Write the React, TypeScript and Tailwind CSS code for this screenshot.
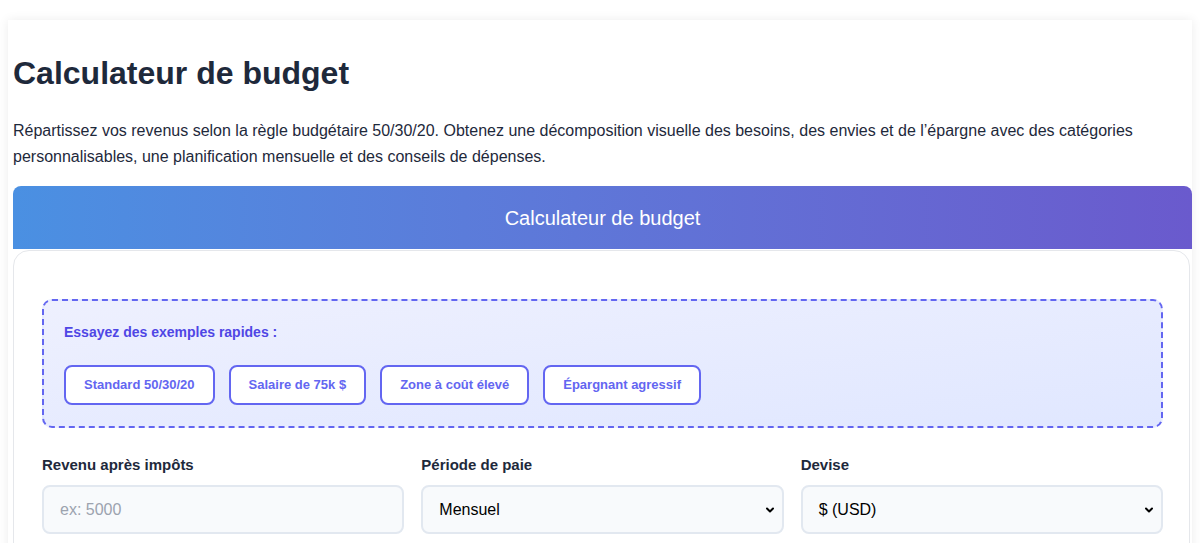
import { ChevronDown } from 'lucide-react'

const examples = ['Standard 50/30/20', 'Salaire de 75k $', 'Zone à coût élevé', 'Épargnant agressif']

export default function App() {
  return (
    <div className="min-h-screen bg-white pt-5 font-['Liberation_Sans',Arial,sans-serif]">
      <div className="mx-2 bg-white pl-[5px] shadow-[0_0_10px_rgba(0,0,0,0.08)]">
        {/* Page intro */}
        <h1 className="pt-[34px] text-[32px] font-bold leading-[38px] text-[#1e293b]">Calculateur de budget</h1>
        <p className="mt-[26px] text-[16px] leading-[26px] text-[#1e293b]">
          Répartissez vos revenus selon la règle budgétaire 50/30/20. Obtenez une décomposition visuelle des besoins, des
          envies et de l’épargne avec des catégories personnalisables, une planification mensuelle et des conseils de dépenses.
        </p>

        {/* Gradient header */}
        <div className="mt-[16px] flex h-[63px] items-center justify-center rounded-t-lg bg-gradient-to-r from-[#4a90e2] to-[#6a5acd]">
          <h2 className="text-[20px] text-white">Calculateur de budget</h2>
        </div>

        {/* Calculator card */}
        <div className="mt-px mr-[2px] rounded-t-2xl border border-[#e5e7eb] bg-white pl-[28px] pr-[26px] pt-[48px] pb-8">
          <div className="rounded-[10px] border-2 border-dashed border-[#6366f1] bg-gradient-to-br from-[#eef0fe] to-[#e0e7ff] px-[20px] pt-[21px] pb-[21px]">
            <p className="text-[14px] font-bold leading-[20px] text-[#4f46e5]">Essayez des exemples rapides :</p>
            <div className="mt-[23px] flex gap-[14px]">
              {examples.map(label => (
                <button
                  key={label}
                  className="h-10 rounded-lg border-2 border-[#6366f1] bg-white px-[18px] text-[13px] font-bold text-[#6366f1]"
                >
                  {label}
                </button>
              ))}
            </div>
          </div>

          <div className="mt-[27px] grid grid-cols-3 gap-[17px]">
            <div>
              <label className="block text-[15px] font-bold leading-[20px] text-[#1e293b]">Revenu après impôts</label>
              <input
                placeholder="ex: 5000"
                className="mt-[10px] h-[49px] w-full rounded-lg border-2 border-[#e2e8f0] bg-[#f8fafc] px-[16px] text-[16px] text-black placeholder:text-[#9ca3af] outline-none"
              />
            </div>
            <div>
              <label className="block text-[15px] font-bold leading-[20px] text-[#1e293b]">Période de paie</label>
              <div className="mt-[10px] flex h-[49px] items-center justify-between rounded-lg border-2 border-[#e2e8f0] bg-[#f8fafc] pl-[16px] pr-[6px] text-[16px] text-black">
                <span>Mensuel</span>
                <ChevronDown className="h-3 w-3" strokeWidth={4} />
              </div>
            </div>
            <div>
              <label className="block text-[15px] font-bold leading-[20px] text-[#1e293b]">Devise</label>
              <div className="mt-[10px] flex h-[49px] items-center justify-between rounded-lg border-2 border-[#e2e8f0] bg-[#f8fafc] pl-[16px] pr-[6px] text-[16px] text-black">
                <span>$ (USD)</span>
                <ChevronDown className="h-3 w-3" strokeWidth={4} />
              </div>
            </div>
          </div>
        </div>
      </div>
    </div>
  )
}
